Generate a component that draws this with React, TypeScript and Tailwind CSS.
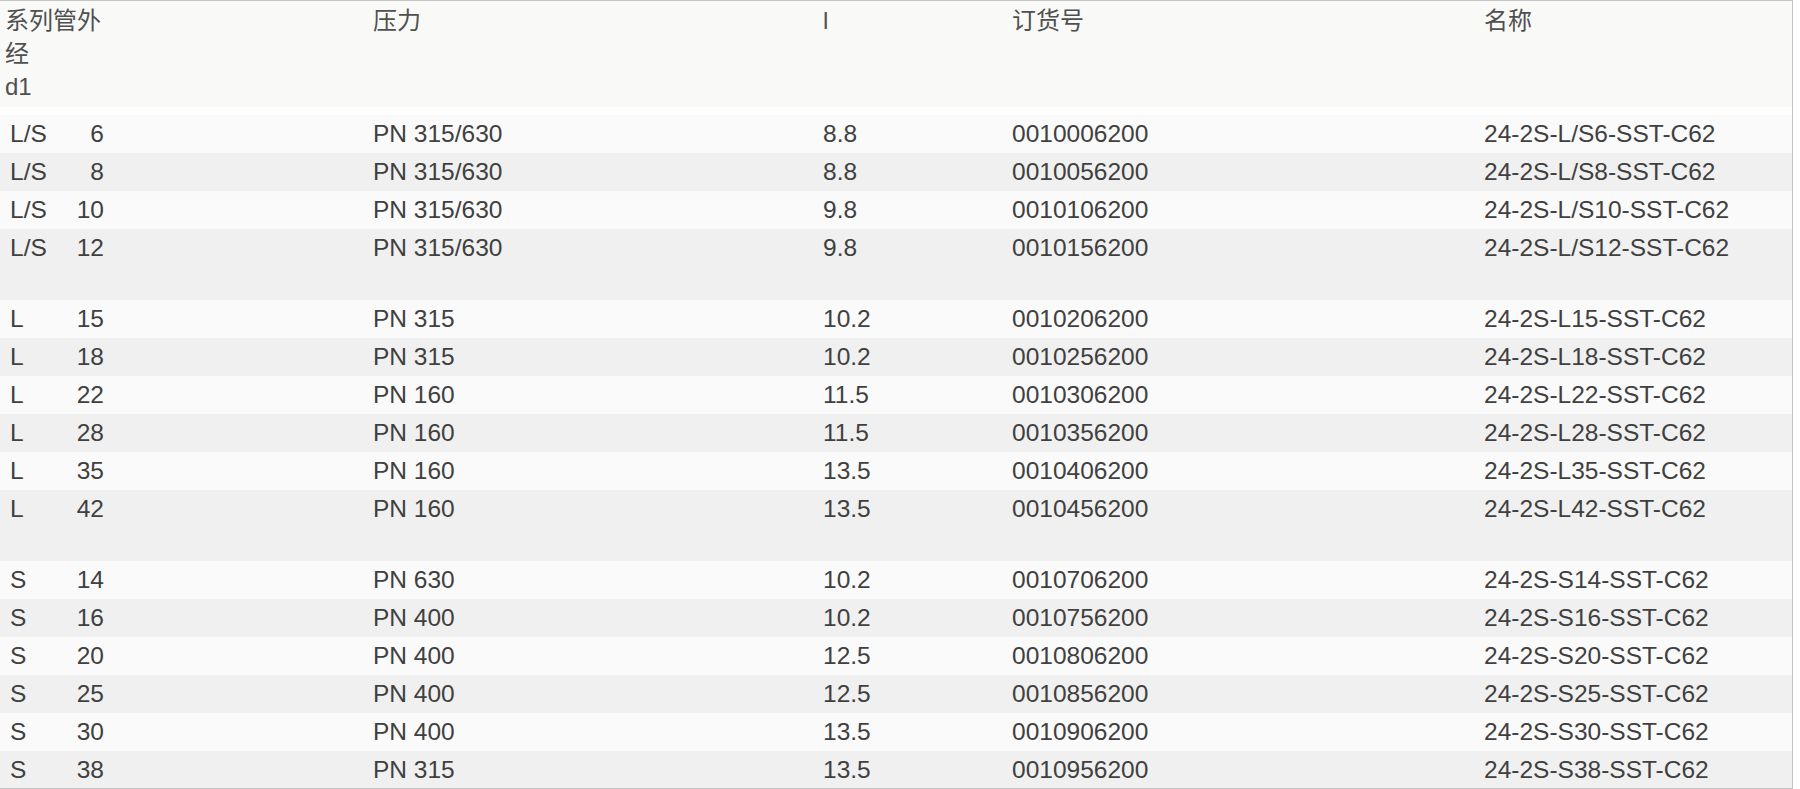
type Row = { s: string; d: string; p: string; l: string; no: string; name: string; gap?: boolean };

const rows: Row[] = [
  { s: 'L/S', d: '6', p: 'PN 315/630', l: '8.8', no: '0010006200', name: '24-2S-L/S6-SST-C62' },
  { s: 'L/S', d: '8', p: 'PN 315/630', l: '8.8', no: '0010056200', name: '24-2S-L/S8-SST-C62' },
  { s: 'L/S', d: '10', p: 'PN 315/630', l: '9.8', no: '0010106200', name: '24-2S-L/S10-SST-C62' },
  { s: 'L/S', d: '12', p: 'PN 315/630', l: '9.8', no: '0010156200', name: '24-2S-L/S12-SST-C62', gap: true },
  { s: 'L', d: '15', p: 'PN 315', l: '10.2', no: '0010206200', name: '24-2S-L15-SST-C62' },
  { s: 'L', d: '18', p: 'PN 315', l: '10.2', no: '0010256200', name: '24-2S-L18-SST-C62' },
  { s: 'L', d: '22', p: 'PN 160', l: '11.5', no: '0010306200', name: '24-2S-L22-SST-C62' },
  { s: 'L', d: '28', p: 'PN 160', l: '11.5', no: '0010356200', name: '24-2S-L28-SST-C62' },
  { s: 'L', d: '35', p: 'PN 160', l: '13.5', no: '0010406200', name: '24-2S-L35-SST-C62' },
  { s: 'L', d: '42', p: 'PN 160', l: '13.5', no: '0010456200', name: '24-2S-L42-SST-C62', gap: true },
  { s: 'S', d: '14', p: 'PN 630', l: '10.2', no: '0010706200', name: '24-2S-S14-SST-C62' },
  { s: 'S', d: '16', p: 'PN 400', l: '10.2', no: '0010756200', name: '24-2S-S16-SST-C62' },
  { s: 'S', d: '20', p: 'PN 400', l: '12.5', no: '0010806200', name: '24-2S-S20-SST-C62' },
  { s: 'S', d: '25', p: 'PN 400', l: '12.5', no: '0010856200', name: '24-2S-S25-SST-C62' },
  { s: 'S', d: '30', p: 'PN 400', l: '13.5', no: '0010906200', name: '24-2S-S30-SST-C62' },
  { s: 'S', d: '38', p: 'PN 315', l: '13.5', no: '0010956200', name: '24-2S-S38-SST-C62' },
];

const cols = 'grid grid-cols-[373px_450px_189px_472px_1fr]';

export default function App() {
  return (
    <div className="w-[1800px] h-[789px] bg-white overflow-hidden">
      <div
        className="w-[1793px] h-[789px] overflow-hidden border-t border-r border-b border-[#c4c4c4] bg-white text-[#404040]"
        style={{ fontFamily: '"Liberation Sans", "Noto Sans CJK SC", Arial, sans-serif' }}
      >
        {/* header */}
        <div className={`${cols} h-[106px] bg-[#f9f9f8] pt-[3px] text-[24px] leading-[33px] text-[#505050]`}>
          <div className="pl-[5px]">
            <div>系列管外</div>
            <div>经</div>
            <div>d1</div>
          </div>
          <div>压力</div>
          <div>l</div>
          <div>订货号</div>
          <div>名称</div>
        </div>
        <div className="h-[8px] bg-white" />

        {/* rows */}
        {rows.map((r, i) => (
          <div
            key={r.name}
            className={`${cols} ${r.gap ? 'h-[71px]' : 'h-[38px]'} ${i % 2 === 0 ? 'bg-[#fafafa]' : 'bg-[#f0f0f0]'} text-[24.5px]`}
          >
            <div className="flex h-[38px] w-[104px] items-center justify-between">
              <span className="pl-[10px]">{r.s}</span>
              <span>{r.d}</span>
            </div>
            <div className="flex h-[38px] items-center">{r.p}</div>
            <div className="flex h-[38px] items-center">{r.l}</div>
            <div className="flex h-[38px] items-center">{r.no}</div>
            <div className="flex h-[38px] items-center">{r.name}</div>
          </div>
        ))}
      </div>
    </div>
  );
}
